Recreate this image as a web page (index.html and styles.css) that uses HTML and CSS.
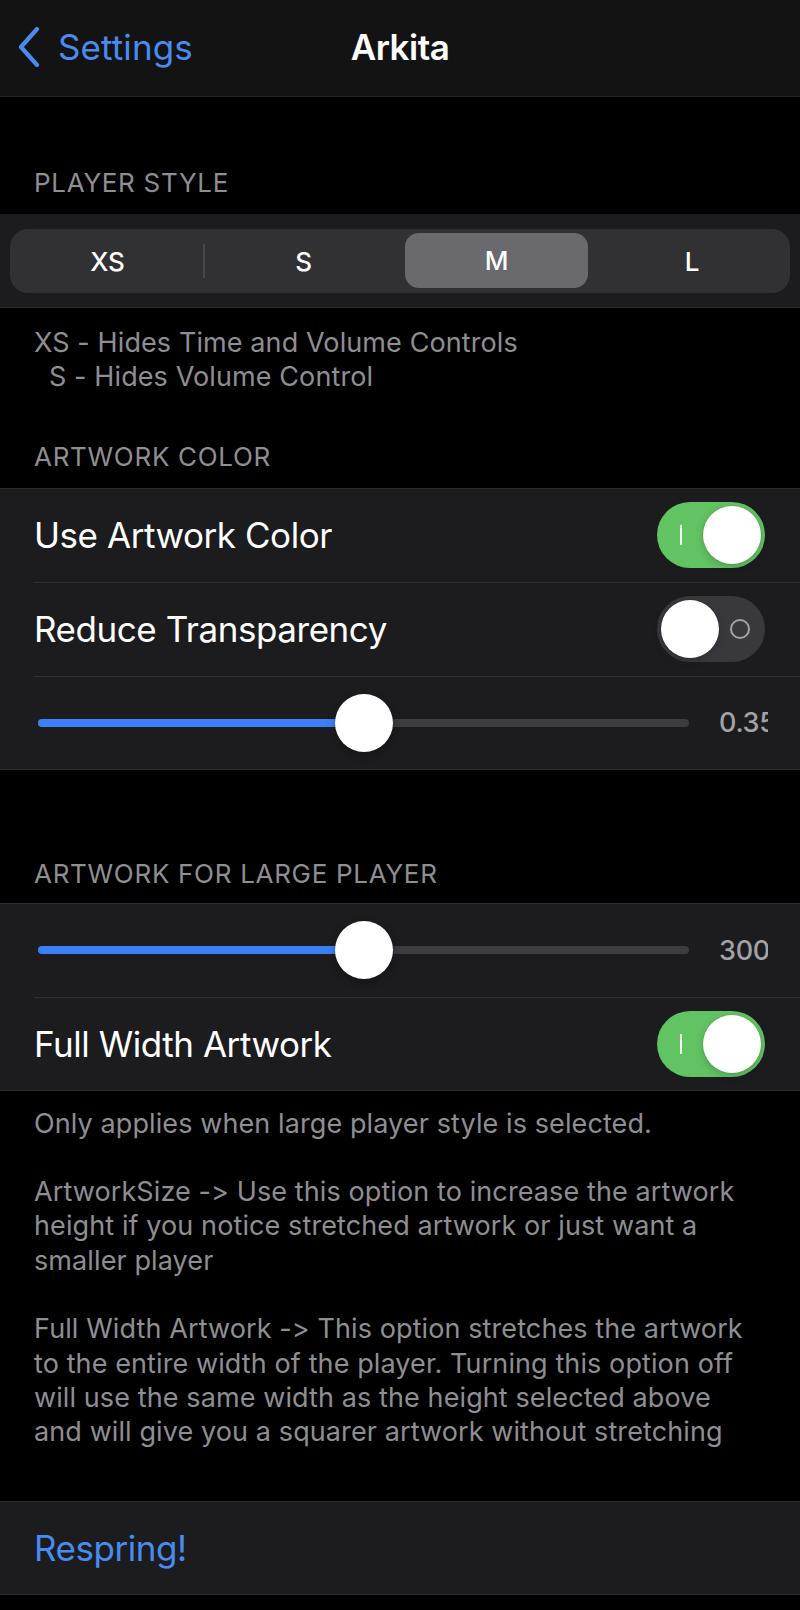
FILE: index.html
```html
<!DOCTYPE html>
<html lang="en">
<head>
<meta charset="utf-8">
<title>Arkita</title>
<link rel="stylesheet" href="styles.css">
</head>
<body>
<div class="screen">
  <header class="nav">
    <div class="nav-back">
      <svg class="chevron" width="24" height="40" viewBox="0 0 24 40"><path d="M20 2 L4 20 L20 38" fill="none" stroke="#4a8bef" stroke-width="4.2" stroke-linecap="round" stroke-linejoin="round"/></svg>
      <span class="back-label">Settings</span>
    </div>
    <div class="nav-title">Arkita</div>
    <div class="nav-spacer"></div>
  </header>

  <div class="section-header first">PLAYER STYLE</div>
  <section class="group seg-group">
    <div class="segmented">
      <div class="seg sep">XS</div>
      <div class="seg">S</div>
      <div class="seg selected">M</div>
      <div class="seg">L</div>
    </div>
  </section>
  <div class="footer short">
    <div>XS - Hides Time and Volume Controls</div>
    <div class="indent">S - Hides Volume Control</div>
  </div>

  <div class="section-header second">ARTWORK COLOR</div>
  <section class="group">
    <div class="row">
      <span class="row-label">Use Artwork Color</span>
      <div class="switch on"><span class="on-mark"></span><span class="knob"></span></div>
    </div>
    <div class="row">
      <span class="row-label">Reduce Transparency</span>
      <div class="switch off"><span class="knob"></span><span class="off-mark"></span></div>
    </div>
    <div class="row slider-row last">
      <div class="slider">
        <div class="track"><div class="fill" style="width:50%"></div></div>
        <div class="thumb" style="left:50%"></div>
      </div>
      <div class="value">0.35</div>
    </div>
  </section>

  <div class="section-header third">ARTWORK FOR LARGE PLAYER</div>
  <section class="group">
    <div class="row slider-row">
      <div class="slider">
        <div class="track"><div class="fill" style="width:50%"></div></div>
        <div class="thumb" style="left:50%"></div>
      </div>
      <div class="value">300</div>
    </div>
    <div class="row last">
      <span class="row-label">Full Width Artwork</span>
      <div class="switch on"><span class="on-mark"></span><span class="knob"></span></div>
    </div>
  </section>
  <div class="footer long">
    <p>Only applies when large player style is selected.</p>
    <p>ArtworkSize -&gt; Use this option to increase the artwork<br>height if you notice stretched artwork or just want a<br>smaller player</p>
    <p>Full Width Artwork -&gt; This option stretches the artwork<br>to the entire width of the player. Turning this option off<br>will use the same width as the height selected above<br>and will give you a squarer artwork without stretching</p>
  </div>

  <section class="group action-group">
    <div class="row last">
      <span class="row-label action">Respring!</span>
    </div>
  </section>
</div>
</body>
</html>
```

FILE: styles.css
```css
* { box-sizing: border-box; }
html, body { margin: 0; padding: 0; background: #000; }
body {
  font-family: "Inter", "Noto Sans", sans-serif;
  color: #fff;
  width: 800px;
  height: 1610px;
  overflow: hidden;
}
.screen { width: 800px; }

.nav {
  height: 97px;
  background: #131313;
  border-bottom: 1px solid #262628;
  display: grid;
  grid-template-columns: 1fr auto 1fr;
  align-items: center;
  padding-bottom: 2px;
}
.nav-back {
  display: flex;
  align-items: center;
  padding-left: 17px;
  gap: 17px;
}
.back-label {
  color: #4a8bef;
  font-size: 35px;
  letter-spacing: 0.1px;
}
.nav-title {
  font-size: 35px;
  font-weight: 600;
  letter-spacing: -0.5px;
}

.section-header {
  color: #8e8e93;
  font-size: 26px;
  line-height: 32px;
  letter-spacing: 0.7px;
  padding-left: 34px;
  padding-bottom: 15px;
}
.section-header.first { padding-top: 70px; }
.section-header.second { padding-top: 46px; }
.section-header.third { padding-top: 88px; padding-bottom: 13px; }

.group {
  background: #1c1c1e;
  border-top: 1px solid #2c2c2e;
  border-bottom: 1px solid #2c2c2e;
}
.seg-group {
  height: 94px;
  padding: 14px 10px;
  border-top-color: #1c1c1e;
}
.segmented {
  height: 64px;
  background: #313134;
  border-radius: 18px;
  padding: 4px;
  display: grid;
  grid-template-columns: repeat(4, 1fr);
}
.seg {
  position: relative;
  display: flex;
  align-items: center;
  justify-content: center;
  font-size: 26px;
  font-weight: 500;
  letter-spacing: -0.2px;
  border-radius: 14px;
}
.seg:first-child { padding-right: 6px; }
.seg:last-child { padding-left: 5px; }
.seg.sep::after {
  content: "";
  position: absolute;
  right: 2px;
  top: 11px;
  bottom: 11px;
  width: 2px;
  background: #47474a;
}
.seg.selected {
  background: #69696e;
  margin: 0 5px 1px;
}

.footer {
  color: #8e8e93;
  font-size: 27px;
  line-height: 34.3px;
  letter-spacing: 0.1px;
  padding: 18px 34px 0 34px;
}
.footer .indent { padding-left: 15px; }
.footer p { margin: 0 0 34.3px 0; }
.footer p:last-child { margin-bottom: 0; }
.footer.long { padding-top: 16px; padding-bottom: 17px; }

.row {
  height: 94px;
  margin-left: 34px;
  padding-right: 35px;
  display: flex;
  align-items: center;
  justify-content: space-between;
  border-bottom: 1px solid #2f2f31;
}
.row.last { border-bottom: none; height: 92px; }
.row-label {
  font-size: 35px;
  letter-spacing: -0.45px;
}
.row-label.action { color: #4a8bef; }

.switch {
  position: relative;
  width: 108px;
  height: 66px;
  border-radius: 33px;
  display: flex;
  align-items: center;
  padding: 0 4px;
}
.switch.on { background: #62c363; justify-content: space-between; padding-left: 23px; }
.switch.off { background: #39393d; justify-content: space-between; padding-right: 15px; }
.knob {
  width: 58px;
  height: 58px;
  border-radius: 50%;
  background: #fff;
  box-shadow: 0 3px 8px rgba(0,0,0,0.18), 0 0 0 1px rgba(0,0,0,0.05);
}
.on-mark {
  width: 2px;
  height: 20px;
  background: rgba(255,255,255,0.9);
}
.off-mark {
  width: 20px;
  height: 20px;
  border: 2px solid #a3a3a8;
  border-radius: 50%;
}

.slider-row { padding-right: 0; }
.slider {
  position: relative;
  margin-left: 4px;
  width: 651px;
  height: 58px;
  display: flex;
  align-items: center;
}
.track {
  width: 100%;
  height: 8px;
  border-radius: 4px;
  background: #3d3d41;
  overflow: hidden;
}
.fill {
  height: 100%;
  background: #3b80f4;
}
.thumb {
  position: absolute;
  top: 0;
  width: 58px;
  height: 58px;
  margin-left: -29px;
  border-radius: 50%;
  background: #fff;
  box-shadow: 0 3px 8px rgba(0,0,0,0.3);
}
.value {
  width: 49px;
  margin-left: 30px;
  margin-right: 32px;
  overflow: hidden;
  white-space: nowrap;
  color: #a2a2a7;
  font-size: 27px;
  font-weight: 500;
  letter-spacing: -0.3px;
}

.action-group { margin-top: 34px; }
.action-group .row { height: 92px; }
```
